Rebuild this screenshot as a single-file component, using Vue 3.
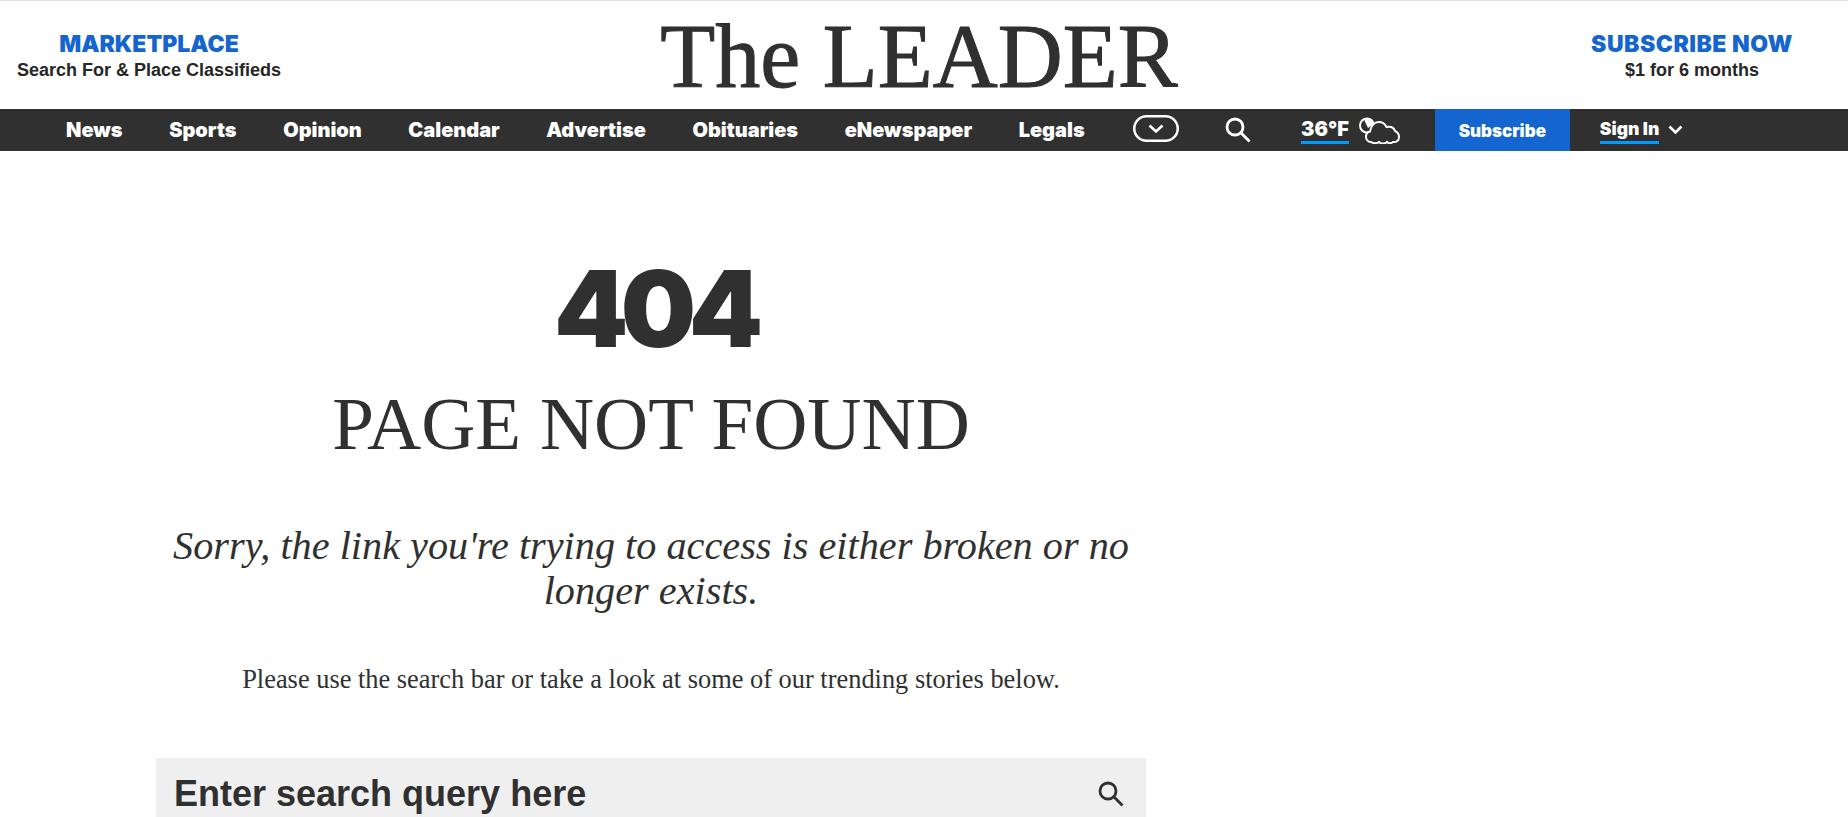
<script setup>
const navItems = ['News', 'Sports', 'Opinion', 'Calendar', 'Advertise', 'Obituaries', 'eNewspaper', 'Legals']
</script>

<template>
  <div class="page">
    <header class="masthead">
      <a class="promo promo-left">
        <span class="promo-title">MARKETPLACE</span>
        <span class="promo-sub">Search For &amp; Place Classifieds</span>
      </a>
      <div class="logo">The LEADER</div>
      <a class="promo promo-right">
        <span class="promo-title">SUBSCRIBE NOW</span>
        <span class="promo-sub">$1 for 6 months</span>
      </a>
    </header>

    <nav class="nav">
      <div class="nav-links">
        <a v-for="item in navItems" :key="item" class="nav-link">{{ item }}</a>
      </div>
      <svg class="pill" width="46" height="27" viewBox="0 0 46 27" fill="none" stroke="#fff">
        <rect x="1.25" y="1.25" width="43.5" height="24.5" rx="12.25" stroke-width="2.5" />
        <path d="M16.500 10.500l6.500 6 6.500-6" stroke-width="2.600" />
      </svg>
      <svg class="search" width="26" height="26" viewBox="0 0 26 26" fill="none" stroke="#fff" stroke-width="2.8">
        <circle cx="10" cy="10" r="8" />
        <path d="M15.800 15.800l8.800 8.800" />
      </svg>
      <a class="temp">36°F</a>
      <svg class="cloud" width="41" height="27" viewBox="0 0 41 27" fill="none" stroke="#fff" stroke-width="2">
        <circle cx="8" cy="8.500" r="7" />
        <path d="M5 2.500a7 7 0 0 1 10 5L9 11z" fill="#fff" stroke="none" />
        <path d="M12 25C8.500 25 7 22 7 19.500 7 16.500 9 15 11 14.500 12 9 15.500 5 20 5c3.500 0 6 2 7.500 5 4.500-1 7.500 1 8.500 4 2.500 1 4 3 4 6 0 3.500-2.500 5.500-6 5-1.500 1.500-4.500 1.500-6 0-2 2-6 2-8 0-2 1.500-6 1.500-8 0z" fill="#303030" />
      </svg>
      <a class="subscribe">Subscribe</a>
      <a class="signin">Sign In</a>
      <svg class="chev" width="15" height="10" viewBox="0 0 15 10" fill="none" stroke="#fff" stroke-width="2.6">
        <path d="M1.500 1.500l6 6 6-6" />
      </svg>
    </nav>

    <main class="main">
      <h1 class="code">404</h1>
      <h2 class="title">PAGE NOT FOUND</h2>
      <p class="lead">Sorry, the link you're trying to access is either broken or no longer exists.</p>
      <p class="hint">Please use the search bar or take a look at some of our trending stories below.</p>
      <form class="searchbar" @submit.prevent>
        <input class="search-input" type="text" placeholder="Enter search query here" />
        <svg class="search-icon" width="26" height="26" viewBox="0 0 26 26" fill="none" stroke="#303030" stroke-width="2.800">
          <circle cx="10" cy="10" r="8" />
          <path d="M15.800 15.800l8.700 8.700" />
        </svg>
      </form>
    </main>
  </div>
</template>

<style>
html, body { margin: 0; background: #fff; overflow: hidden; }
</style>

<style scoped>
.page { width: 1848px; height: 817px; overflow: hidden; border-top: 1px solid #e0e0e0; box-sizing: border-box; color: #303030; }
.masthead { height: 108px; display: flex; align-items: center; }
.promo { display: flex; flex-direction: column; align-items: center; text-align: center; padding-top: 2px; }
.promo-left { width: 298px; }
.promo-right { width: 312px; }
.promo-right .promo-title { letter-spacing: 0.5px; }
.promo-title { font: 900 23px/28px "Inter", sans-serif; color: #1565d0; }
.promo-sub { font: 700 18px/24px "Liberation Sans", sans-serif; color: #262626; }
.logo { flex: 1; text-align: center; font: 400 90px/104px "Liberation Serif", serif; -webkit-text-stroke: 1px #303030; white-space: nowrap; padding: 3px 0 0 4px; }
.nav { height: 42px; background: #303030; display: flex; align-items: center; color: #fff; padding-left: 66px; font: 900 20px/46px "Inter", sans-serif; }
.nav-links { display: flex; gap: 46.5px; width: 1067px; }
.nav-link { white-space: nowrap; }
.pill { flex: none; margin-top: -3px; }
.search { flex: none; margin-left: 46px; }
.temp { margin-left: 50px; line-height: 24px; border-bottom: 3px solid #009bff; }
.cloud { flex: none; margin-left: 10px; }
.subscribe { margin-left: 35px; width: 135px; height: 42px; background: #1565d0; text-align: center; font-size: 17px; line-height: 44px; }
.signin { margin-left: 30px; line-height: 24px; font-size: 17.500px; border-bottom: 3px solid #009bff; }
.chev { flex: none; margin-left: 9px; }
.main { margin-left: 156px; width: 990px; text-align: center; }
.code { margin: 98px 0 0; font: 900 106px/120px "Inter", sans-serif; letter-spacing: -7.500px; padding-left: 7.500px; }
.title { margin: 10px 0 0; font: 400 75px/90px "Liberation Serif", serif; }
.lead { margin: 54px 0 0; font: italic 400 40.250px/45px "Liberation Serif", serif; }
.hint { margin: 50px 0 0; font: 400 26.400px/32px "Liberation Serif", serif; }
.searchbar { margin-top: 63px; height: 72px; background: #efefef; display: flex; align-items: center; padding: 0 22px 0 18px; }
.search-input { flex: 1; border: 0; background: transparent; outline: 0; padding: 0; font: 700 36px/72px "Liberation Sans", sans-serif; color: #303030; }
.search-input::placeholder { color: #303030; opacity: 1; }
.search-icon { flex: none; }
</style>
